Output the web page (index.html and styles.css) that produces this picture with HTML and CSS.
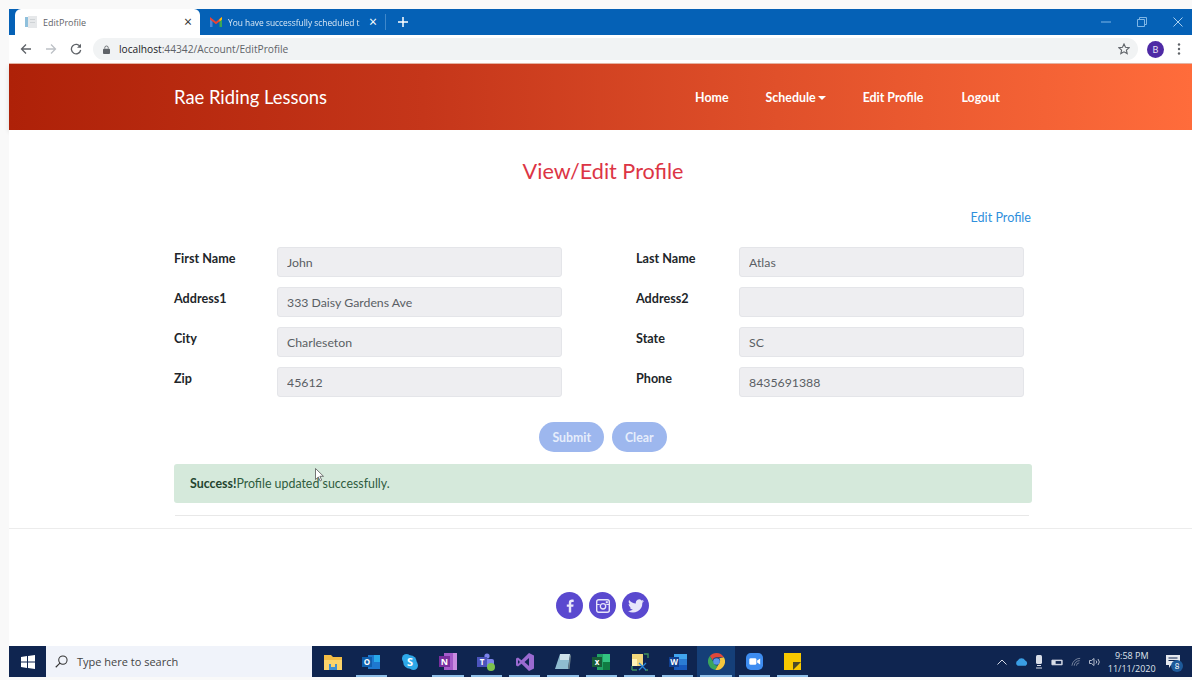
FILE: index.html
```html
<!DOCTYPE html>
<html lang="en">

<head>
    <meta charset="UTF-8">
    <meta name="viewport" content="width=device-width, initial-scale=1.0">
    <title>EditProfile</title>
    <link rel="stylesheet" href="styles.css">
</head>

<body>
    <div class="browser">
        <!-- tab strip -->
        <div class="tabstrip">
            <div class="tab tab-active">
                <svg class="tab-icon" viewBox="0 0 12 12" width="12" height="12">
                    <rect x="0" y="1" width="3" height="10" fill="#8fc0dc" />
                    <rect x="3" y="0" width="9" height="12" fill="#e6e8ea" />
                    <rect x="5" y="3" width="5" height="1" fill="#cfd3d6" />
                    <rect x="5" y="6" width="5" height="1" fill="#cfd3d6" />
                </svg>
                <span class="tab-title">EditProfile</span>
                <span class="tab-close">&times;</span>
            </div>
            <div class="tab tab-other">
                <svg class="tab-icon" viewBox="0 0 12 10" width="12" height="10">
                    <path d="M0 1V10H2.500V3.200Z" fill="#4a86d8" />
                    <path d="M12 1V10H9.500V3.200Z" fill="#3aa757" />
                    <path d="M0 0 6 4.800 12 0V2.500L6 7.300 0 2.500Z" fill="#ea4335" />
                    <path d="M9.500 2 12 0V2.500L9.500 4.500Z" fill="#f4c20d" />
                </svg>
                <span class="tab-title tab-title-fade">You have successfully scheduled t</span>
                <span class="tab-close">&times;</span>
            </div>
            <span class="tab-sep"></span>
            <svg class="tab-new" viewBox="0 0 10 10" width="10" height="10">
                <path d="M5 0v10M0 5h10" stroke="#fff" stroke-width="1.500" />
            </svg>
            <div class="win-controls">
                <svg viewBox="0 0 10 10" width="10" height="10"><path d="M0 5h10" stroke="#7fb6e6" stroke-width="1" /></svg>
                <svg viewBox="0 0 10 10" width="10" height="10"><path d="M.5 2.500h7v7h-7zM2.500 2.500v-2h7v7h-2" fill="none" stroke="#7fb6e6" stroke-width="1" /></svg>
                <svg viewBox="0 0 10 10" width="10" height="10"><path d="M.5.500l9 9M9.500.500l-9 9" stroke="#a9d0f0" stroke-width="1" /></svg>
            </div>
        </div>

        <!-- address bar -->
        <div class="toolbar">
            <svg class="tool-icon" viewBox="0 0 12 12" width="12" height="12"><path d="M11 6H1.500M6 1.500 1.500 6 6 10.500" fill="none" stroke="#5f6368" stroke-width="1.300" /></svg>
            <svg class="tool-icon" viewBox="0 0 12 12" width="12" height="12"><path d="M1 6h9.500M6 1.500 10.500 6 6 10.500" fill="none" stroke="#bdc1c6" stroke-width="1.300" /></svg>
            <svg class="tool-icon" viewBox="0 0 12 12" width="12" height="12"><path d="M10.300 4A4.700 4.700 0 1 0 10.700 7" fill="none" stroke="#5f6368" stroke-width="1.300" /><path d="M11 .8V4.800H7Z" fill="#5f6368" /></svg>
            <div class="omnibox">
                <svg class="lock" viewBox="0 0 8 10" width="7" height="9"><path d="M2 4V3a2 2 0 0 1 4 0v1" fill="none" stroke="#5f6368" /><rect y="4" width="8" height="6" rx="1" fill="#5f6368" /></svg>
                <span class="url"><span class="url-host">localhost</span><span class="url-rest">:44342/Account/EditProfile</span></span>
                <svg class="star" viewBox="0 0 12 12" width="12" height="12"><path d="M6 1l1.500 3.300 3.600.4-2.700 2.400.8 3.500L6 8.800l-3.200 1.800.8-3.500L.9 4.700l3.600-.4Z" fill="none" stroke="#5f6368" stroke-width="1.100" /></svg>
            </div>
            <span class="avatar">B</span>
            <svg class="kebab" viewBox="0 0 4 12" width="4" height="12"><circle cx="2" cy="1.500" r="1.200" fill="#5f6368" /><circle cx="2" cy="6" r="1.200" fill="#5f6368" /><circle cx="2" cy="10.500" r="1.200" fill="#5f6368" /></svg>
        </div>

        <!-- site -->
        <nav class="navbar">
            <a class="brand">Rae Riding Lessons</a>
            <ul class="nav-links">
                <li class="link-home">Home</li>
                <li class="link-schedule">Schedule <span class="caret"></span></li>
                <li class="link-edit">Edit Profile</li>
                <li class="link-logout">Logout</li>
            </ul>
        </nav>

        <main class="page">
            <div class="container">
                <h1 class="page-title">View/Edit Profile</h1>
                <div class="edit-link-row"><a class="edit-link">Edit Profile</a></div>

                <form class="profile-form">
                    <label>First Name</label>
                    <input class="field" type="text" value="John" disabled>
                    <span></span>
                    <label>Last Name</label>
                    <input class="field" type="text" value="Atlas" disabled>

                    <label>Address1</label>
                    <input class="field" type="text" value="333 Daisy Gardens Ave" disabled>
                    <span></span>
                    <label>Address2</label>
                    <input class="field" type="text" value="" disabled>

                    <label>City</label>
                    <input class="field" type="text" value="Charleseton" disabled>
                    <span></span>
                    <label>State</label>
                    <input class="field" type="text" value="SC" disabled>

                    <label>Zip</label>
                    <input class="field" type="text" value="45612" disabled>
                    <span></span>
                    <label>Phone</label>
                    <input class="field" type="text" value="8435691388" disabled>
                </form>

                <div class="buttons-container">
                    <button class="btn" type="button">Submit</button>
                    <button class="btn" type="button">Clear</button>
                </div>

                <div class="alert"><strong>Success!</strong>Profile updated successfully.</div>
                <hr class="rule-inner">
            </div>
            <hr class="rule-outer">

            <div class="social">
                <span class="social-btn">
                    <svg viewBox="0 0 10 16" width="8" height="14"><path d="M6.500 16V9h2.600l.4-3H6.500V4.300c0-.9.300-1.400 1.500-1.400h1.600V.2C9.300.1 8.400 0 7.400 0 5.100 0 3.500 1.400 3.500 3.900V6H1v3h2.500v7Z" fill="#e8e6fa" /></svg>
                </span>
                <span class="social-btn">
                    <svg viewBox="0 0 14 14" width="14" height="14"><rect x=".7" y=".7" width="12.600" height="12.600" rx="2" fill="none" stroke="#e8e6fa" stroke-width="1.400" /><path d="M.7 5.500h3M10.300 5.500h3" stroke="#e8e6fa" stroke-width="1.200" /><circle cx="7" cy="7.300" r="2.700" fill="none" stroke="#e8e6fa" stroke-width="1.300" /><rect x="9.800" y="2.200" width="2" height="2" fill="#e8e6fa" /></svg>
                </span>
                <span class="social-btn">
                    <svg viewBox="0 0 24 20" width="16" height="14"><path d="M24 2.400c-.9.400-1.800.7-2.800.8 1-.6 1.800-1.600 2.200-2.700-1 .6-2 1-3.100 1.200A4.900 4.900 0 0 0 11.900 6.200C7.800 6 4.200 4 1.700.9c-1.300 2.200-.7 5.100 1.500 6.600-.8 0-1.600-.2-2.200-.6 0 2.400 1.600 4.500 3.900 5-.7.200-1.500.2-2.200.1.600 2 2.400 3.400 4.600 3.400A9.900 9.900 0 0 1 0 17.400 14 14 0 0 0 21.500 5c1-.7 1.800-1.600 2.500-2.600Z" fill="#e8e6fa" /></svg>
                </span>
            </div>
        </main>

        <!-- windows taskbar -->
        <div class="taskbar">
            <div class="start">
                <svg viewBox="0 0 14 14" width="14" height="14"><path d="M0 2 6 1.100V6.500H0ZM7 1 14 0V6.500H7ZM0 7.500H6V12.900L0 12ZM7 7.500H14V14L7 13Z" fill="#fff" /></svg>
            </div>
            <div class="search">
                <svg viewBox="0 0 14 14" width="13" height="13"><circle cx="8.500" cy="5.500" r="4.500" fill="none" stroke="#333" stroke-width="1.100" /><path d="M5.300 8.700.8 13.200" stroke="#333" stroke-width="1.200" /></svg>
                <span>Type here to search</span>
            </div>
            <div class="apps">
                <span class="app">
                    <svg viewBox="0 0 18 16" width="18" height="16"><path d="M0 1h7l2 2h9v13H0Z" fill="#f3bd45" /><path d="M0 6h18v10H0Z" fill="#fbd46b" /><path d="M5 10h8v6H5Z" fill="#3d8fd4" /><path d="M7 10h4v3H7Z" fill="#fbd46b" /></svg>
                </span>
                <span class="app app-open">
                    <svg viewBox="0 0 18 16" width="18" height="16"><rect x="6" y="1" width="12" height="14" fill="#1e78d0" /><rect x="12" y="1" width="6" height="7" fill="#28a8ea" /><rect y="3" width="10" height="10" fill="#0f5fae" /><text class="icon-letter" x="5" y="11" text-anchor="middle" font-size="8">O</text></svg>
                </span>
                <span class="app">
                    <svg viewBox="0 0 16 16" width="16" height="16"><circle cx="4.500" cy="4.500" r="4.500" fill="#2ea8e8" /><circle cx="11.500" cy="11.500" r="4.500" fill="#2ea8e8" /><circle cx="8" cy="8" r="6.800" fill="#2ea8e8" /><text class="icon-letter" x="8" y="12" text-anchor="middle" font-size="11">S</text></svg>
                </span>
                <span class="app app-open">
                    <svg viewBox="0 0 18 17" width="18" height="17"><rect x="5" width="13" height="17" fill="#a45bc9" /><rect x="14" y="0" width="4" height="17" fill="#c98be0" /><rect y="3" width="11" height="11" fill="#7a2e9e" /><text class="icon-letter" x="5.500" y="12" text-anchor="middle" font-size="9">N</text></svg>
                </span>
                <span class="app app-open">
                    <svg viewBox="0 0 18 18" width="18" height="18"><circle cx="10" cy="3" r="2.600" fill="#7b83eb" /><rect x="7" y="6" width="10" height="8" rx="2" fill="#7b83eb" /><rect y="4" width="10" height="10" fill="#4b53bc" /><text class="icon-letter" x="5" y="12" text-anchor="middle" font-size="8">T</text><circle cx="14" cy="14" r="4" fill="#7cc24d" /></svg>
                </span>
                <span class="app app-open">
                    <svg viewBox="0 0 18 18" width="18" height="18"><path d="M13 0 18 2.500V15.500L13 18 5.500 10.800 2 13.500 0 12.500V5.500L2 4.500 5.500 7.200ZM13 5 8.500 9 13 13ZM2 7V11L4 9Z" fill="#9a6ad0" /></svg>
                </span>
                <span class="app app-open">
                    <svg viewBox="0 0 18 18" width="18" height="18"><path d="M6 1h10l-2 15H1Z" fill="#8fbcd0" /><path d="M6 1h10l-1 6H6Z" fill="#cfe2ea" /><path d="M14 16l2-15 1 2-1.500 13Z" fill="#6b7f8a" /></svg>
                </span>
                <span class="app app-open">
                    <svg viewBox="0 0 18 16" width="18" height="16"><rect x="5" width="13" height="16" fill="#21a366" /><rect x="11" y="0" width="7" height="8" fill="#33c481" /><rect x="11" y="8" width="7" height="8" fill="#107c41" /><rect y="3" width="10" height="10" fill="#185c37" /><text class="icon-letter" x="5" y="11" text-anchor="middle" font-size="8">x</text></svg>
                </span>
                <span class="app app-open">
                    <svg viewBox="0 0 18 18" width="18" height="18"><rect x="1" y="1" width="11" height="12" fill="#f2d77c" /><path d="M1 6h5v7H1Z" fill="#fff2b8" /><path d="M13 1h4v4M1 17V13M1 17h5M17 17h-3" fill="none" stroke="#3f8f5a" stroke-width="1.400" /><path d="M8 10l7 7M15 10l-7 7" stroke="#2a86d8" stroke-width="1.300" /></svg>
                </span>
                <span class="app app-open">
                    <svg viewBox="0 0 18 16" width="18" height="16"><rect x="5" width="13" height="16" fill="#2b7cd3" /><rect x="5" y="0" width="13" height="5" fill="#41a5ee" /><rect x="5" y="11" width="13" height="5" fill="#185abd" /><rect y="3" width="10" height="10" fill="#103f91" /><text class="icon-letter" x="5" y="11" text-anchor="middle" font-size="8">W</text></svg>
                </span>
                <span class="app app-open app-active">
                    <svg viewBox="0 0 18 18" width="17" height="17"><path d="M9 0a9 9 0 0 1 7.800 4.500H9A4.500 4.500 0 0 0 4.700 7.600L2 3.300A9 9 0 0 1 9 0Z" fill="#e0483a" /><path d="M2 3.300 6 10.200A4.500 4.500 0 0 0 10.200 13.300L7.700 17.900A9 9 0 0 1 2 3.300Z" fill="#3ba55c" /><path d="M16.800 4.500A9 9 0 0 1 7.700 17.900L12 10.500A4.500 4.500 0 0 0 12 5.500Z" fill="#f4c63d" /><circle cx="9" cy="9" r="3.500" fill="#5a95e8" /></svg>
                </span>
                <span class="app app-open">
                    <svg viewBox="0 0 18 18" width="17" height="17"><rect width="18" height="18" rx="5" fill="#3d8cf0" /><rect x="3.500" y="5.500" width="7.500" height="7" rx="1.500" fill="#fff" /><path d="M11.800 8 15 5.800V12.200L11.800 10Z" fill="#fff" /></svg>
                </span>
                <span class="app app-open">
                    <svg viewBox="0 0 17 17" width="17" height="17"><rect width="17" height="17" fill="#f7c800" /><path d="M17 9 9 17V9Z" fill="#4b4a28" /></svg>
                </span>
            </div>
            <div class="tray">
                <svg viewBox="0 0 10 6" width="10" height="6"><path d="M.5 5.500 5 1l4.500 4.500" fill="none" stroke="#d5dbe6" stroke-width="1" /></svg>
                <svg viewBox="0 0 14 9" width="13" height="9"><path d="M3 9a3 3 0 0 1 0-5.500A4.500 4.500 0 0 1 11 3.500 3 3 0 0 1 11.500 9Z" fill="#3a9ee4" /></svg>
                <svg viewBox="0 0 8 14" width="8" height="14"><rect x="1" width="6" height="9" rx="1.500" fill="#d9dee8" /><rect x="2" y="10" width="4" height="1" fill="#d9dee8" /><rect x="1" y="12.500" width="6" height="1" fill="#d9dee8" /></svg>
                <svg viewBox="0 0 14 8" width="13" height="8"><path d="M1 2h11v5H1Z" fill="#d9dee8" stroke="#d9dee8" /><rect x="5" y="3" width="6" height="3" fill="#0f2550" /></svg>
                <svg viewBox="0 0 12 10" width="11" height="10"><path d="M1 9a9 9 0 0 1 9-8M3.500 9a6 6 0 0 1 6-5.500M6 9a3 3 0 0 1 3-3" fill="none" stroke="#7d8aa3" stroke-width="1" /></svg>
                <svg viewBox="0 0 12 10" width="12" height="10"><path d="M.5 3.500h2L5 1.500v7l-2.500-2h-2Z" fill="none" stroke="#c5ccd9" stroke-width=".9" /><path d="M7 3.500a2 2 0 0 1 0 3M9 2a4.500 4.500 0 0 1 0 6" fill="none" stroke="#c5ccd9" stroke-width=".9" /></svg>
                <div class="clock"><span>9:58 PM</span><span>11/11/2020</span></div>
                <div class="notify">
                    <svg viewBox="0 0 14 13" width="14" height="13"><path d="M0 0h14v10H5l-2 3v-3H0Z" fill="#e4e8ef" /><path d="M2.500 3h9M2.500 5.500h9" stroke="#0f2550" /></svg>
                    <span class="notify-badge">8</span>
                </div>
            </div>
        </div>

        <!-- mouse pointer from the recording -->
        <svg class="cursor" viewBox="0 0 9 14" width="9" height="14"><path d="M.5.500v11l2.800-2.500 1.800 4 1.600-.8-1.800-3.900H8.500Z" fill="#fff" stroke="#555" stroke-width=".8" /></svg>
    </div>
</body>

</html>
```

FILE: styles.css
```css
html,
body {
    margin: 0;
    height: 680px;
    overflow: hidden;
    background-color: #f9f9f9;
}

body {
    padding: 9px 0 0 9px;
    box-sizing: border-box;
    font-family: "Lato", "Liberation Sans", sans-serif;
}

.browser {
    position: relative;
    width: 1183px;
}

/* tab strip */
.tabstrip {
    display: flex;
    align-items: center;
    height: 26px;
    background-color: #0561b6;
    font-family: "Open Sans", "Liberation Sans", sans-serif;
    font-size: 9px;
}

.tab {
    display: flex;
    align-items: center;
    height: 26px;
    box-sizing: border-box;
}

.tab-active {
    width: 185px;
    margin-left: 6px;
    padding: 0 8px 0 10px;
    background-color: #fff;
    border-radius: 6px 6px 0 0;
    color: #5f6368;
}

.tab-other {
    width: 185px;
    padding: 0 8px 0 10px;
    color: #dbe8f5;
}

.tab-icon {
    flex-shrink: 0;
    margin-right: 6px;
}

.tab-title {
    flex: 1;
    white-space: nowrap;
}

.tab-title-fade {
    font-size: 8.400px;
    -webkit-mask-image: linear-gradient(90deg, #000 92%, rgba(0, 0, 0, 0.25) 100%);
    mask-image: linear-gradient(90deg, #000 92%, rgba(0, 0, 0, 0.25) 100%);
}

.tab-close {
    font-size: 14px;
    line-height: 14px;
}

.tab-active .tab-close {
    color: #333;
}

.tab-other .tab-close {
    color: #fff;
}

.tab-sep {
    width: 1px;
    height: 16px;
    background-color: #3f88cb;
}

.tab-new {
    margin-left: 12px;
}

.win-controls {
    display: flex;
    align-items: center;
    gap: 26px;
    margin-left: auto;
    padding-right: 9px;
}

/* address bar */
.toolbar {
    display: flex;
    align-items: center;
    height: 29px;
    padding: 0 11px 0 11px;
    box-sizing: border-box;
    background-color: #fff;
    border-bottom: 1px solid #e9b7a6;
}

.tool-icon {
    margin-right: 13px;
}

.tool-icon:nth-child(3) {
    margin-right: 11px;
}

.omnibox {
    display: flex;
    align-items: center;
    width: 1045px;
    height: 22px;
    padding: 0 8px 0 10px;
    box-sizing: border-box;
    background-color: #f1f3f4;
    border-radius: 11px;
    font-family: "Open Sans", "Liberation Sans", sans-serif;
    font-size: 10.200px;
}

.lock {
    margin-right: 9px;
}

.url-host {
    color: #202124;
}

.url-rest {
    color: #5f6368;
}

.star {
    margin-left: auto;
}

.avatar {
    display: flex;
    align-items: center;
    justify-content: center;
    width: 17px;
    height: 17px;
    margin-left: 9px;
    border-radius: 50%;
    background-color: #4e2aa5;
    color: #e8e2f5;
    font-size: 9px;
}

.kebab {
    margin-left: 13px;
}

/* site nav */
.navbar {
    display: flex;
    align-items: center;
    height: 66px;
    padding-left: 165px;
    box-sizing: border-box;
    background: linear-gradient(90deg, #ae2108 0%, #c5361a 35%, #e0502a 65%, #ff6c3b 100%);
    box-shadow: 0 2px 5px rgba(0, 0, 0, 0.12);
}

.brand {
    color: #fff;
    font-size: 18.400px;
}

.nav-links {
    display: flex;
    margin: 0;
    padding: 0;
    list-style: none;
    color: #fff;
    font-size: 12.400px;
    font-weight: 700;
}

.link-home {
    margin-left: 368px;
}

.link-schedule {
    margin-left: 37px;
}

.link-edit {
    margin-left: 37px;
}

.link-logout {
    margin-left: 38px;
}

.caret {
    display: inline-block;
    margin-left: -1px;
    vertical-align: 2px;
    border-top: 4px solid #fff;
    border-left: 4px solid transparent;
    border-right: 4px solid transparent;
}

/* page */
.page {
    height: 516px;
    background-color: #fff;
}

.container {
    width: 858px;
    margin-left: 165px;
}

.page-title {
    margin: 0;
    padding-top: 27px;
    color: #dc3545;
    font-size: 21.600px;
    font-weight: 400;
    line-height: 28px;
    text-align: center;
}

.edit-link-row {
    margin-top: 22px;
    padding-right: 1px;
    line-height: 18px;
    text-align: right;
}

.edit-link {
    color: #2f8fdc;
    font-size: 12.600px;
}

.profile-form {
    display: grid;
    grid-template-columns: 103px 285px 74px 103px 285px;
    row-gap: 10px;
    margin-top: 20px;
}

.profile-form label {
    color: #212529;
    font-size: 12.600px;
    font-weight: 700;
    line-height: 24px;
}

.field {
    height: 30px;
    padding: 0 9px;
    box-sizing: border-box;
    border: 1px solid #e4e5e9;
    border-radius: 3px;
    background-color: #eeeef1;
    color: #5a5e64;
    font-family: "Lato", "Liberation Sans", sans-serif;
    font-size: 12.300px;
}

.buttons-container {
    display: flex;
    justify-content: center;
    gap: 8px;
    margin-top: 25px;
}

.btn {
    height: 30px;
    padding: 0 13px;
    border: none;
    border-radius: 15px;
    background-color: #9db7ee;
    color: #e6edfb;
    font-family: "Lato", "Liberation Sans", sans-serif;
    font-size: 12.300px;
    font-weight: 700;
}

.alert {
    height: 39px;
    margin-top: 12px;
    padding-left: 16px;
    box-sizing: border-box;
    border-radius: 3px;
    background-color: #d5e9db;
    color: #2f5c3e;
    font-size: 12.400px;
    line-height: 40px;
}

.alert strong {
    color: #24452f;
}

.rule-inner {
    height: 1px;
    margin: 12px 3px 0 1px;
    border: none;
    background-color: #e8e8e8;
}

.rule-outer {
    height: 1px;
    margin: 12px 0 0;
    border: none;
    background-color: #ececec;
}

.social {
    display: flex;
    justify-content: center;
    gap: 6px;
    margin-top: 63px;
    padding-left: 4px;
}

.social-btn {
    display: flex;
    align-items: center;
    justify-content: center;
    width: 27px;
    height: 27px;
    border-radius: 50%;
    background-color: #5a49cf;
}

/* taskbar */
.taskbar {
    display: flex;
    align-items: center;
    height: 31px;
    background-color: #0f2550;
}

.start {
    display: flex;
    align-items: center;
    justify-content: center;
    width: 37px;
    height: 31px;
}

.search {
    display: flex;
    align-items: center;
    gap: 9px;
    width: 266px;
    height: 31px;
    padding-left: 9px;
    box-sizing: border-box;
    background-color: #f0f3fa;
    color: #444;
    font-family: "Open Sans", "Liberation Sans", sans-serif;
    font-size: 11px;
}

.apps {
    display: flex;
    margin-left: 2px;
}

.app {
    position: relative;
    display: flex;
    align-items: center;
    justify-content: center;
    width: 38.300px;
    height: 31px;
    box-sizing: border-box;
}

/* running-app marker, narrower than the button */
.app-open::after {
    content: "";
    position: absolute;
    left: 3.500px;
    right: 3.500px;
    bottom: 0;
    height: 2px;
    background-color: #8fbfe8;
}

.app-active {
    background-color: #153f78;
}

.icon-letter {
    fill: #fff;
    font-family: "Open Sans", "Liberation Sans", sans-serif;
    font-weight: 700;
}

.tray {
    display: flex;
    align-items: center;
    gap: 7.400px;
    margin-left: auto;
    padding-right: 12px;
    color: #dfe4ec;
}

.clock {
    display: flex;
    flex-direction: column;
    align-items: center;
    margin-left: -1px;
    font-family: "Open Sans", "Liberation Sans", sans-serif;
    font-size: 9px;
    line-height: 13px;
}

.notify {
    position: relative;
    display: flex;
    margin-left: 3px;
}

.notify-badge {
    position: absolute;
    right: -3px;
    bottom: -4px;
    width: 12px;
    height: 12px;
    border-radius: 50%;
    background-color: #1d5a9a;
    color: #fff;
    font-size: 8px;
    line-height: 12px;
    text-align: center;
}

.cursor {
    position: absolute;
    left: 306px;
    top: 459px;
}
```
